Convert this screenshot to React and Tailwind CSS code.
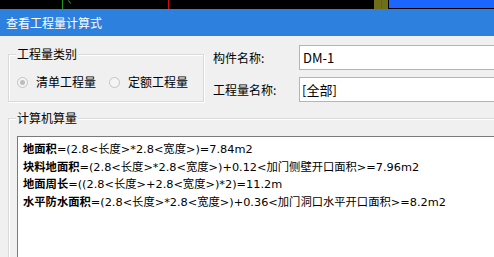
import React from 'react';

const cjk = { fontFamily: '"Noto Sans CJK SC", "Noto Sans", sans-serif' };
const mixed = { fontFamily: '"DejaVu Sans", "Noto Sans CJK SC", sans-serif' };

const lines = [
    { name: '地面积', expr: '=(2.8<长度>*2.8<宽度>)=7.84m2' },
    { name: '块料地面积', expr: '=(2.8<长度>*2.8<宽度>)+0.12<加门侧壁开口面积>=7.96m2' },
    { name: '地面周长', expr: '=((2.8<长度>+2.8<宽度>)*2)=11.2m' },
    { name: '水平防水面积', expr: '=(2.8<长度>*2.8<宽度>)+0.36<加门洞口水平开口面积>=8.2m2' },
];

function Radio({ checked, label }) {
    return (
        <div className="flex items-center gap-[8px]">
            <span className="flex h-[11px] w-[11px] items-center justify-center rounded-full border border-[#c4c4c4] bg-[#f4f4f4]">
                {checked && <span className="h-[5px] w-[5px] rounded-full bg-[#bdbdbd]" />}
            </span>
            <span className="text-[12px] leading-none text-black">{label}</span>
        </div>
    );
}

export default function App() {
    return (
        <div className="relative h-[257px] w-[494px] overflow-hidden bg-[#f0f0f0]" style={cjk}>
            {/* desktop behind the dialog */}
            <div className="relative h-[9px] bg-black">
                <span className="absolute left-[62px] top-0 h-[9px] w-[1px] bg-[#1f9a1f]" />
                <span className="absolute left-[69px] top-0 h-[4px] w-[1px] rotate-[-40deg] bg-[#1f9a1f]" />
                <span className="absolute left-[168px] top-0 h-[9px] w-[1px] bg-[#d01010]" />
                <span className="absolute left-[374px] top-0 h-[9px] w-[14px] bg-[#6f6f1a]" />
                <span className="absolute left-[381px] top-0 h-[9px] w-[1px] bg-[#c0301a]" />
                <span className="absolute left-[389px] top-0 h-[8px] w-[105px] bg-[#1a66ff]" />
            </div>

            {/* title bar */}
            <div className="flex h-[27px] items-center bg-[#2d80dd] pl-[6px] text-[12px] text-white">
                查看工程量计算式
            </div>

            {/* top row */}
            <div className="flex">
                <div className="relative ml-[8px] mt-[18px] h-[48px] w-[196px] shrink-0 border border-[#d9d9d9] shadow-[inset_1px_1px_0_#ffffff,1px_1px_0_#ffffff]">
                    <span className="absolute left-[7px] top-[-8px] bg-[#f0f0f0] px-[1px] text-[12px] leading-[14px] text-black">
                        工程量类别
                    </span>
                    <div className="ml-[8px] mt-[21px] flex gap-[13px]">
                        <Radio checked label="清单工程量" />
                        <Radio label="定额工程量" />
                    </div>
                </div>

                <div className="ml-[9px] mt-[9px] flex flex-1 flex-col gap-[7px]">
                    <div className="flex items-center">
                        <span className="w-[86px] shrink-0 text-[12px] text-black">构件名称:</span>
                        <div className="flex h-[25px] w-[200px] shrink-0 items-center border border-[#b4b4b4] bg-white pl-[3px] text-[13px] text-black">
                            DM-1
                        </div>
                    </div>
                    <div className="flex items-center">
                        <span className="w-[86px] shrink-0 text-[12px] text-black">工程量名称:</span>
                        <div className="flex h-[25px] w-[200px] shrink-0 items-center border border-[#b4b4b4] bg-white pl-[2px] text-[13px] text-black">
                            [全部]
                        </div>
                    </div>
                </div>
            </div>

            {/* calculation group */}
            <div className="relative ml-[8px] mt-[16px] h-[160px] w-[500px] border border-[#d9d9d9] shadow-[inset_1px_1px_0_#ffffff]">
                <span className="absolute left-[7px] top-[-8px] bg-[#f0f0f0] px-[1px] text-[12px] leading-[14px] text-black">
                    计算机算量
                </span>
                <div className="ml-[8px] mt-[17px] h-[160px] w-[500px] border border-[#7a7a7a] bg-white pl-[5px] pt-[4px]" style={mixed}>
                    {lines.map((l) => (
                        <div key={l.name} className="whitespace-nowrap text-[11.3px] leading-[17.5px] text-black">
                            <span className="font-bold">{l.name}</span>
                            <span>{l.expr}</span>
                        </div>
                    ))}
                </div>
            </div>
        </div>
    );
}
